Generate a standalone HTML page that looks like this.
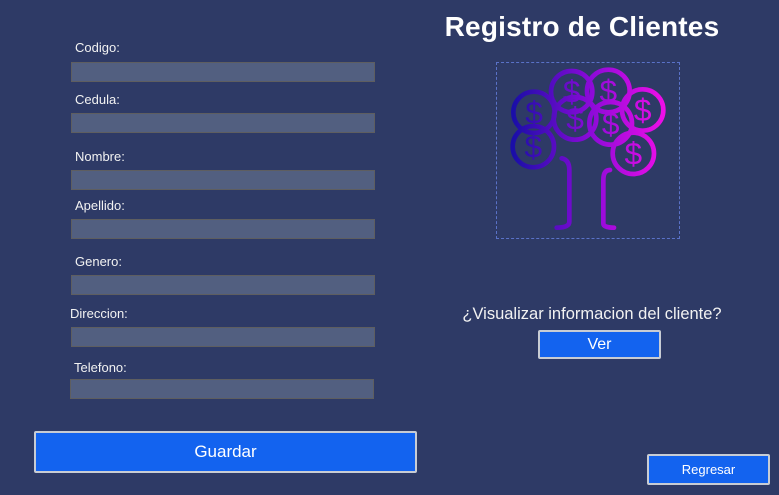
<!DOCTYPE html>
<html><head><meta charset="utf-8"><style>
*{margin:0;padding:0;box-sizing:border-box}
body{width:779px;height:495px;background:#2e3a66;position:relative;overflow:hidden;font-family:"Liberation Sans",sans-serif;color:#fff}
.l{position:absolute;font-size:13px;color:#f2f2f2}
.i{position:absolute;width:304px;height:20px;background:#525f80;border:1px solid #5e5e60}
.b{position:absolute;background:#1363ef;border:2px solid #c8ccd4;border-radius:2px;color:#fff;text-align:center}
h1{position:absolute;left:430px;width:304px;top:11px;text-align:center;font-size:28px;font-weight:bold;letter-spacing:0.2px}
</style></head><body>
<div class="l" style="left:75px;top:40px">Codigo:</div><div class="i" style="left:71px;top:62px"></div>
<div class="l" style="left:75px;top:92px">Cedula:</div><div class="i" style="left:71px;top:113px"></div>
<div class="l" style="left:75px;top:149px">Nombre:</div><div class="i" style="left:71px;top:170px"></div>
<div class="l" style="left:75px;top:198px">Apellido:</div><div class="i" style="left:71px;top:219px"></div>
<div class="l" style="left:75px;top:254px">Genero:</div><div class="i" style="left:71px;top:275px"></div>
<div class="l" style="left:70px;top:306px">Direccion:</div><div class="i" style="left:71px;top:327px"></div>
<div class="l" style="left:74px;top:360px">Telefono:</div><div class="i" style="left:70px;top:379px"></div>
<div class="b" style="left:34px;top:431px;width:383px;height:42px;font-size:17px;line-height:38px">Guardar</div>
<h1>Registro de Clientes</h1>
<div style="position:absolute;left:496px;top:62px;width:184px;height:177px;border:1px dashed #5a72c8"></div>
<svg style="position:absolute;left:490px;top:55px" width="200" height="190" viewBox="0 0 600 570">
<defs><linearGradient id="g" x1="70" y1="0" x2="525" y2="0" gradientUnits="userSpaceOnUse"><stop offset="0" stop-color="#1a0ea8"/><stop offset="0.5" stop-color="#8a0ad8"/><stop offset="1" stop-color="#f00ee8"/></linearGradient></defs>
<g fill="none" stroke="url(#g)" stroke-width="14" stroke-linecap="round">
<circle cx="130" cy="275" r="62"/><circle cx="132" cy="172" r="62"/><circle cx="245" cy="110" r="62"/><circle cx="355" cy="108" r="64"/><circle cx="458" cy="165" r="62"/><circle cx="255" cy="190" r="64"/><circle cx="362" cy="205" r="64"/><circle cx="430" cy="295" r="62"/>
<path d="M215 310 Q238 315 238 345 L238 500 Q238 518 200 518"/>
<path d="M360 345 Q340 345 340 375 L340 505 Q340 518 372 518"/>
</g>
<g fill="url(#g)" font-family="Liberation Sans" font-size="95" text-anchor="middle">
<text x="130" y="308">$</text><text x="132" y="205">$</text><text x="245" y="143">$</text><text x="355" y="141">$</text><text x="458" y="198">$</text><text x="255" y="223">$</text><text x="362" y="238">$</text><text x="430" y="328">$</text>
</g></svg>
<div style="position:absolute;left:420px;width:344px;top:305px;text-align:center;font-size:16.5px;color:#f2f2f2">¿Visualizar informacion del cliente?</div>
<div class="b" style="left:538px;top:330px;width:123px;height:29px;font-size:16px;line-height:25px">Ver</div>
<div class="b" style="left:647px;top:454px;width:123px;height:31px;font-size:13px;line-height:27px">Regresar</div>
</body></html>
